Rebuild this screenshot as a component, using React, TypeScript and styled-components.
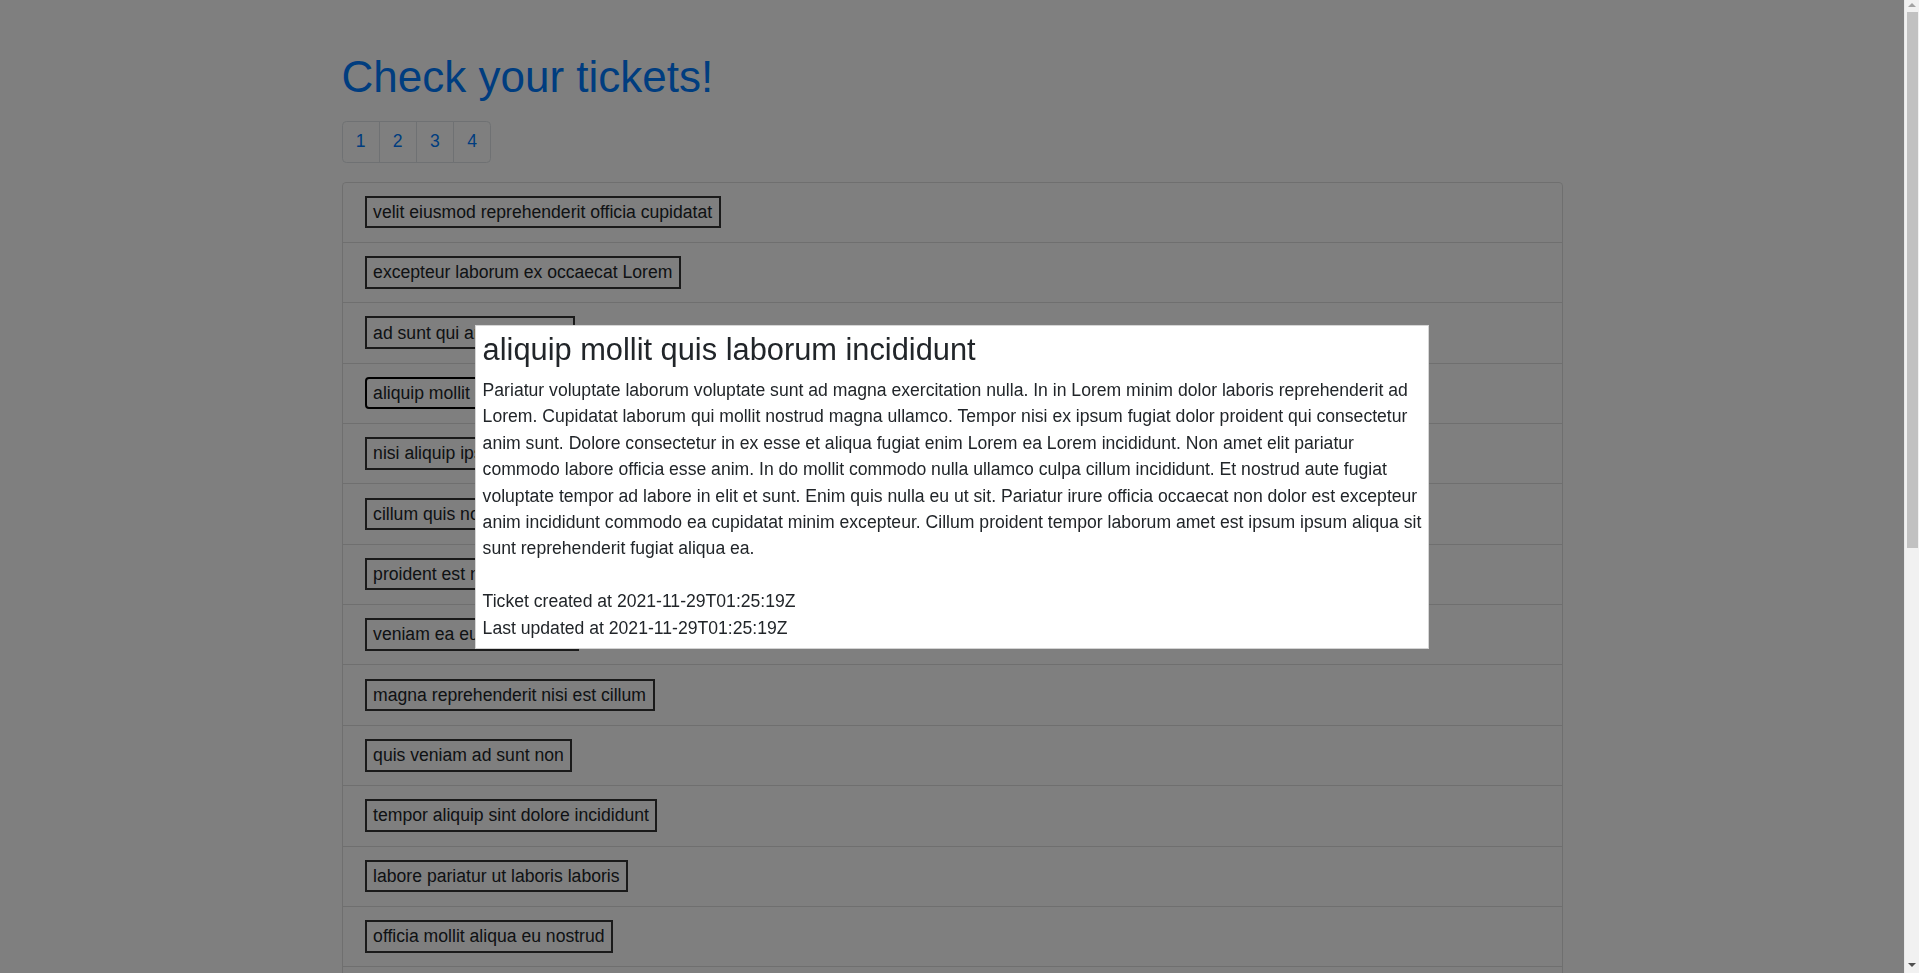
import React from "react";
import styled, { createGlobalStyle } from "styled-components";

const GlobalStyle = createGlobalStyle`
  *, *::before, *::after { box-sizing: border-box; }
  html, body { margin: 0; padding: 0; height: 100%; overflow: hidden; }
  body {
    font-family: "Liberation Sans", Arial, sans-serif;
    font-size: 17.6px;
    line-height: 1.5;
    color: #212529;
    background: #fff;
  }
`;

const Shell = styled.div`
  display: flex;
  height: 100vh;
`;

const Viewport = styled.div`
  flex: 1;
  min-width: 0;
  overflow-y: auto;
  scrollbar-width: none;
  &::-webkit-scrollbar { display: none; }
`;

const ScrollBar = styled.aside`
  flex: 0 0 15px;
  display: flex;
  flex-direction: column;
  align-items: center;
  background: #f1f1f1;
  border-left: 1px solid #e8e8e8;
`;

const Arrow = styled.div<{ $down?: boolean }>`
  flex: 0 0 auto;
  width: 0;
  height: 0;
  margin: ${(p) => (p.$down ? "auto 0 6px" : "3px 0 0")};
  border-left: 4px solid transparent;
  border-right: 4px solid transparent;
  ${(p) =>
    p.$down
      ? "border-top: 4px solid #505050;"
      : "border-bottom: 4px solid #a3a3a3;"}
`;

const Thumb = styled.div`
  width: 11px;
  height: 536px;
  margin: 5px 0 0 1px;
  background: #c1c1c1;
`;

const Container = styled.main`
  max-width: 1254px;
  margin: 0 auto;
  padding: 50.6px 16.5px 32px;
`;

const Title = styled.h1`
  margin: 0 0 17.6px;
  font-size: 44px;
  font-weight: 400;
  line-height: 1.2;
  color: #007bff;
`;

const Pagination = styled.ul`
  display: flex;
  list-style: none;
  padding: 0;
  margin: 0 0 19px;
`;

const PageLink = styled.a<{ $first?: boolean; $last?: boolean }>`
  display: block;
  padding: 8.8px 13.2px;
  margin-left: ${(p) => (p.$first ? "0" : "-1px")};
  line-height: 1.25;
  color: #007bff;
  text-decoration: none;
  background: #fff;
  border: 1px solid #dee2e6;
  border-radius: ${(p) =>
    p.$first ? "4.4px 0 0 4.4px" : p.$last ? "0 4.4px 4.4px 0" : "0"};
`;

const List = styled.ul`
  display: flex;
  flex-direction: column;
  list-style: none;
  padding: 0;
  margin: 0;
`;

const Item = styled.li<{ $first?: boolean; $last?: boolean }>`
  display: flex;
  align-items: flex-start;
  padding: 13.2px 22px 13.6px;
  margin-bottom: -1px;
  background: #fff;
  border: 1px solid rgba(0, 0, 0, 0.125);
  border-radius: ${(p) =>
    p.$first ? "4.4px 4.4px 0 0" : p.$last ? "0 0 4.4px 4.4px" : "0"};
`;

const TicketButton = styled.button<{ $focused?: boolean }>`
  font: inherit;
  line-height: 1.5;
  color: #212529;
  background: transparent;
  padding: 1.1px 6.6px;
  border: 2px solid ${(p) => (p.$focused ? "#000" : "#343434")};
  border-radius: ${(p) => (p.$focused ? "4px" : "0")};
  cursor: pointer;
`;

const Overlay = styled.div`
  position: fixed;
  top: 0;
  left: 0;
  bottom: 0;
  right: 15px;
  background: rgba(0, 0, 0, 0.5);
  z-index: 10;
`;

const Modal = styled.section`
  position: absolute;
  top: 50%;
  left: 50%;
  transform: translate(-50%, -50%);
  width: 50%;
  padding: 6.6px;
  background: #fff;
  box-shadow: 0 0 0 1px #d6d6d6;
`;

const ModalTitle = styled.h3`
  margin: 0 0 8px;
  font-size: 30.8px;
  font-weight: 400;
  line-height: 1.2;
`;

const Description = styled.p`
  margin: 0 0 26.4px;
`;

const Meta = styled.div`
  display: flex;
  flex-direction: column;
`;

const visible = [
  "velit eiusmod reprehenderit officia cupidatat",
  "excepteur laborum ex occaecat Lorem",
  "ad sunt qui amet nostrud",
  "aliquip mollit quis laborum incididunt",
  "nisi aliquip ipsum do elit",
  "cillum quis non laboris",
  "proident est nulla sint",
  "veniam ea eu sunt dolore",
  "magna reprehenderit nisi est cillum",
  "quis veniam ad sunt non",
  "tempor aliquip sint dolore incididunt",
  "labore pariatur ut laboris laboris",
  "officia mollit aliqua eu nostrud",
];

const words = [
  "lorem", "ipsum", "dolor", "sit", "amet", "consectetur", "adipisicing", "elit",
  "sunt", "culpa", "qui", "officia", "deserunt", "mollit", "anim", "id", "est",
  "laborum", "esse", "cillum", "fugiat", "nulla", "pariatur", "excepteur", "sint",
  "occaecat", "cupidatat", "non", "proident", "magna", "aliqua", "veniam",
];

const generated = Array.from({ length: 12 }, (_, i) => {
  const n = 3 + (i % 3);
  return Array.from({ length: n }, (_, j) => words[(i * 7 + j * 5 + 3) % words.length]).join(" ");
});

const tickets = [...visible, ...generated];

export default function App() {
  return (
    <>
      <GlobalStyle />
      <Shell>
        <Viewport>
          <Container>
            <Title>Check your tickets!</Title>
            <nav>
              <Pagination>
                {[1, 2, 3, 4].map((n, i) => (
                  <li key={n}>
                    <PageLink href="#" $first={i === 0} $last={i === 3}>
                      {n}
                    </PageLink>
                  </li>
                ))}
              </Pagination>
            </nav>
            <List>
              {tickets.map((t, i) => (
                <Item key={i} $first={i === 0} $last={i === tickets.length - 1}>
                  <TicketButton $focused={i === 3}>{t}</TicketButton>
                </Item>
              ))}
            </List>
          </Container>
        </Viewport>
        <ScrollBar aria-hidden="true">
          <Arrow />
          <Thumb />
          <Arrow $down />
        </ScrollBar>
      </Shell>
      <Overlay>
        <Modal>
          <ModalTitle>aliquip mollit quis laborum incididunt</ModalTitle>
          <Description>
            Pariatur voluptate laborum voluptate sunt ad magna exercitation nulla. In in Lorem minim
            dolor laboris reprehenderit ad Lorem. Cupidatat laborum qui mollit nostrud magna ullamco.
            Tempor nisi ex ipsum fugiat dolor proident qui consectetur anim sunt. Dolore consectetur in
            ex esse et aliqua fugiat enim Lorem ea Lorem incididunt. Non amet elit pariatur commodo
            labore officia esse anim. In do mollit commodo nulla ullamco culpa cillum incididunt. Et
            nostrud aute fugiat voluptate tempor ad labore in elit et sunt. Enim quis nulla eu ut sit.
            Pariatur irure officia occaecat non dolor est excepteur anim incididunt commodo ea
            cupidatat minim excepteur. Cillum proident tempor laborum amet est ipsum ipsum aliqua sit
            sunt reprehenderit fugiat aliqua ea.
          </Description>
          <Meta>
            <span>Ticket created at 2021-11-29T01:25:19Z</span>
            <span>Last updated at 2021-11-29T01:25:19Z</span>
          </Meta>
        </Modal>
      </Overlay>
    </>
  );
}
